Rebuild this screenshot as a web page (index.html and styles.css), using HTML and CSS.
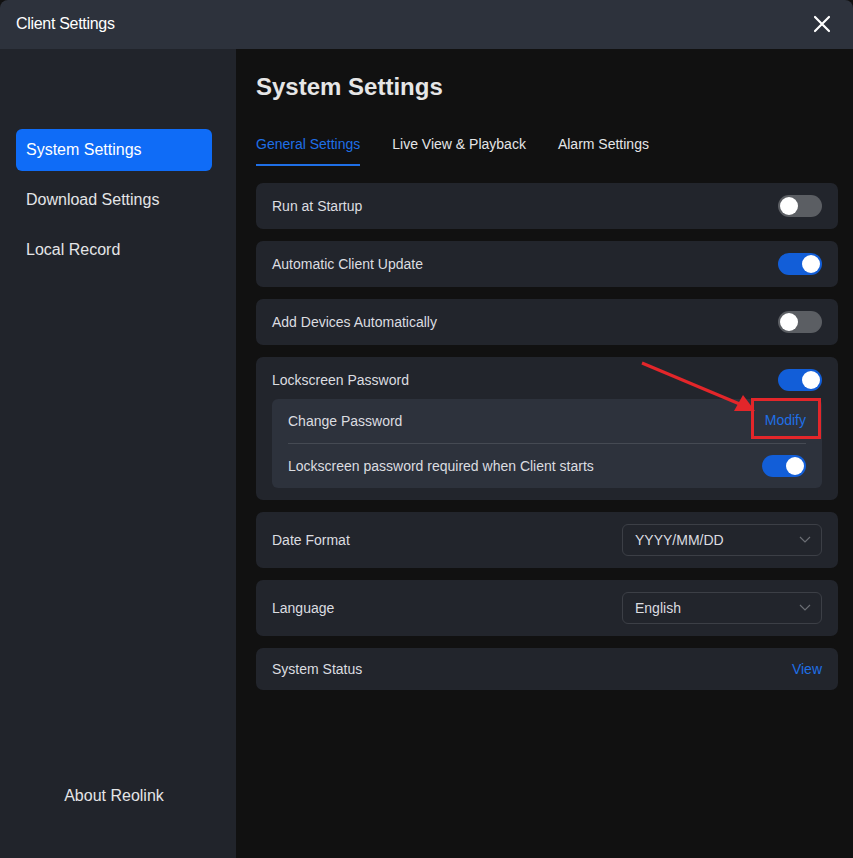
FILE: index.html
```html
<!DOCTYPE html>
<html lang="en">
<head>
    <meta charset="UTF-8">
    <meta name="viewport" content="width=device-width, initial-scale=1.0">
    <title>Client Settings</title>
    <link rel="stylesheet" href="styles.css">
</head>
<body>
<div class="window">
    <div class="titlebar">
        <span class="title">Client Settings</span>
        <svg class="close" width="18" height="18" viewBox="0 0 18 18">
            <path d="M2 2 L16 16 M16 2 L2 16" stroke="#fff" stroke-width="2.2" stroke-linecap="round"/>
        </svg>
    </div>
    <div class="body">
        <div class="sidebar">
            <div class="menu">
                <div class="menu-item active">System Settings</div>
                <div class="menu-item">Download Settings</div>
                <div class="menu-item">Local Record</div>
            </div>
            <div class="about">About Reolink</div>
        </div>
        <div class="main">
            <h1>System Settings</h1>
            <div class="tabs">
                <div class="tab active">General Settings</div>
                <div class="tab">Live View &amp; Playback</div>
                <div class="tab">Alarm Settings</div>
            </div>

            <div class="card row">
                <span>Run at Startup</span>
                <span class="toggle"></span>
            </div>
            <div class="card row">
                <span>Automatic Client Update</span>
                <span class="toggle on"></span>
            </div>
            <div class="card row">
                <span>Add Devices Automatically</span>
                <span class="toggle"></span>
            </div>
            <div class="card lock">
                <div class="lock-head">
                    <span>Lockscreen Password</span>
                    <span class="toggle on"></span>
                </div>
                <div class="sub">
                    <div class="sub-row divider">
                        <span>Change Password</span>
                        <span class="link modify">Modify</span>
                    </div>
                    <div class="sub-row">
                        <span>Lockscreen password required when Client starts</span>
                        <span class="toggle on"></span>
                    </div>
                </div>
                <svg class="arrow" width="130" height="60" viewBox="0 0 130 60">
                    <line x1="4" y1="4" x2="104" y2="46" stroke="#e3262a" stroke-width="3"/>
                    <polygon points="117,52 96,52 105,36" fill="#e3262a"/>
                </svg>
            </div>
            <div class="card row tall">
                <span>Date Format</span>
                <div class="select">YYYY/MM/DD
                    <svg width="12" height="8" viewBox="0 0 12 8"><path d="M1 1 L6 6 L11 1" stroke="#6b6e74" stroke-width="1.2" fill="none"/></svg>
                </div>
            </div>
            <div class="card row tall">
                <span>Language</span>
                <div class="select">English
                    <svg width="12" height="8" viewBox="0 0 12 8"><path d="M1 1 L6 6 L11 1" stroke="#6b6e74" stroke-width="1.2" fill="none"/></svg>
                </div>
            </div>
            <div class="card row short">
                <span>System Status</span>
                <span class="link">View</span>
            </div>
        </div>
    </div>
</div>
</body>
</html>
```

FILE: styles.css
```css
* {
    box-sizing: border-box;
}

html, body {
    margin: 0;
    background: #111111;
}

body {
    font-family: "Liberation Sans", Arial, sans-serif;
    color: #dcdde0;
}

.window {
    width: 853px;
    height: 858px;
    display: flex;
    flex-direction: column;
    border-radius: 8px 8px 0 0;
    overflow: hidden;
    background: #111111;
}

.titlebar {
    height: 49px;
    flex: none;
    background: #2d323c;
    display: flex;
    align-items: center;
    justify-content: space-between;
    padding: 0 22px 2px 16px;
}

.title {
    font-size: 16px;
    color: #ffffff;
    letter-spacing: -0.3px;
}

.close {
    display: block;
}

.body {
    flex: 1;
    display: flex;
}

.sidebar {
    width: 236px;
    flex: none;
    background: #21242b;
    display: flex;
    flex-direction: column;
    justify-content: space-between;
    padding: 80px 24px 53px 16px;
}

.menu-item {
    height: 42px;
    line-height: 42px;
    padding-left: 10px;
    margin-bottom: 8px;
    font-size: 16px;
    color: #e4e5e7;
    border-radius: 6px;
}

.menu-item.active {
    background: #0f6cf7;
    color: #ffffff;
}

.about {
    text-align: center;
    font-size: 16px;
    color: #e4e5e7;
}

.main {
    flex: 1;
    padding: 24px 15px 0 20px;
}

h1 {
    margin: 0;
    font-size: 24px;
    font-weight: bold;
    color: #e6e6e6;
    line-height: 28px;
}

.tabs {
    display: flex;
    gap: 32px;
    margin-top: 33px;
    margin-bottom: 17px;
}

.tab {
    font-size: 14px;
    color: #e4e5e7;
    padding-bottom: 10px;
    line-height: 20px;
    border-bottom: 2px solid transparent;
}

.tab.active {
    color: #1f6fe6;
    border-bottom-color: #1f6fe6;
}

.card {
    background: #22252c;
    border-radius: 7px;
    margin-bottom: 12px;
    font-size: 14px;
    color: #dcdde0;
}

.row {
    height: 46px;
    display: flex;
    align-items: center;
    justify-content: space-between;
    padding: 0 16px;
}

.row.tall {
    height: 56px;
}

.row.short {
    height: 42px;
}

.toggle {
    width: 44px;
    height: 22px;
    border-radius: 11px;
    background: #5b5e63;
    position: relative;
    flex: none;
}

.toggle::after {
    content: "";
    position: absolute;
    top: 2px;
    left: 2px;
    width: 18px;
    height: 18px;
    border-radius: 50%;
    background: #ffffff;
}

.toggle.on {
    background: #125ed8;
}

.toggle.on::after {
    left: 24px;
}

.lock {
    position: relative;
    padding: 12px 16px 12px 16px;
}

.lock-head {
    display: flex;
    align-items: center;
    justify-content: space-between;
    height: 22px;
    margin-bottom: 8px;
}

.sub {
    background: #2d323c;
    border-radius: 6px;
    padding: 0 16px;
}

.sub-row {
    height: 44px;
    display: flex;
    align-items: center;
    justify-content: space-between;
}

.sub-row.divider {
    height: 45px;
    border-bottom: 1px solid #454a53;
}

.link {
    color: #1f6fe6;
    font-size: 14px;
}

.modify {
    position: relative;
    top: -3px;
    outline: 3px solid #e3262a;
    padding: 11px 12px 8px 11px;
    margin-right: -12px;
}

.arrow {
    position: absolute;
    left: 382px;
    top: 2px;
}

.select {
    width: 200px;
    height: 32px;
    border: 1px solid #3c3f46;
    border-radius: 6px;
    display: flex;
    align-items: center;
    justify-content: space-between;
    padding: 0 10px 0 12px;
    color: #dcdde0;
}
```
